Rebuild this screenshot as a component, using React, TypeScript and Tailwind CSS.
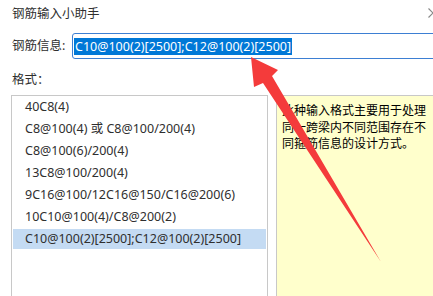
const FORMATS = [
  '40C8(4)',
  'C8@100(4) 或 C8@100/200(4)',
  'C8@100(6)/200(4)',
  '13C8@100/200(4)',
  '9C16@100/12C16@150/C16@200(6)',
  '10C10@100(4)/C8@200(2)',
  'C10@100(2)[2500];C12@100(2)[2500]',
];

const VALUE = 'C10@100(2)[2500];C12@100(2)[2500]';

export default function App() {
  const selected = FORMATS.length - 1;

  return (
    <div
      className="relative w-[433px] h-[296px] overflow-hidden bg-white text-[#2f2f2f] text-[12.5px]"
      style={{ fontFamily: '"Noto Sans", "Noto Sans CJK SC", sans-serif' }}
    >
      <div className="w-[460px] h-full flex flex-col">
        {/* title bar, close button sits partly outside the crop */}
        <div className="h-[28px] flex items-center pl-3">
          <span className="leading-none whitespace-nowrap shrink-0">钢筋输入小助手</span>
          <svg width="10" height="10" viewBox="0 0 10 10" className="shrink-0 ml-[328px] mb-[2px]">
            <path d="M0.5 0.5 L9.5 9.5 M9.5 0.5 L0.5 9.5" stroke="#8a8a8a" strokeWidth="1.2" fill="none" />
          </svg>
        </div>

        {/* input row */}
        <div className="mt-[5px] flex items-center pl-3">
          <span className="w-[60px] shrink-0">钢筋信息:</span>
          <div className="flex-1 h-[26px] flex items-center border border-[#3d7fd3] rounded-l-[3px] pl-[1px]">
            <span className="bg-[#0078d7] text-white leading-[17px] px-[1px]">{VALUE}</span>
          </div>
        </div>

        <div className="mt-[13px] pl-3 leading-[16px]">格式：</div>

        {/* panels */}
        <div className="mt-[7px] flex flex-1 pl-[11px]">
          <div className="w-[257px] shrink-0 border border-b-0 border-[#c8c8c8] pt-[1px] px-[1px]">
            {FORMATS.map((f, i) => (
              <div key={f} className="h-[22px]">
                <div
                  className={
                    'h-[20px] flex items-center pl-[12px] whitespace-nowrap ' +
                    (i === selected ? 'bg-[#c4dbf3]' : '')
                  }
                >
                  {f}
                </div>
              </div>
            ))}
          </div>
          <div className="ml-[8px] flex-1 border-l border-t border-[#c8c8c8] bg-[#ffffcc] pl-[5px] pt-[6px]">
            <p
              className="w-[148px] text-[12px] leading-[16.5px] text-black"
              style={{ fontFamily: '"Noto Sans CJK SC", sans-serif' }}
            >
              此种输入格式主要用于处理同一跨梁内不同范围存在不同箍筋信息的设计方式。
            </p>
          </div>
        </div>
      </div>

      {/* red annotation arrow */}
      <svg className="absolute inset-0 pointer-events-none" width="433" height="296" viewBox="0 0 433 296">
        <polygon
          points="251,57 278,70 272,76 381,262 263,83 254,87"
          fill="#f43b3b"
        />
      </svg>
    </div>
  );
}
